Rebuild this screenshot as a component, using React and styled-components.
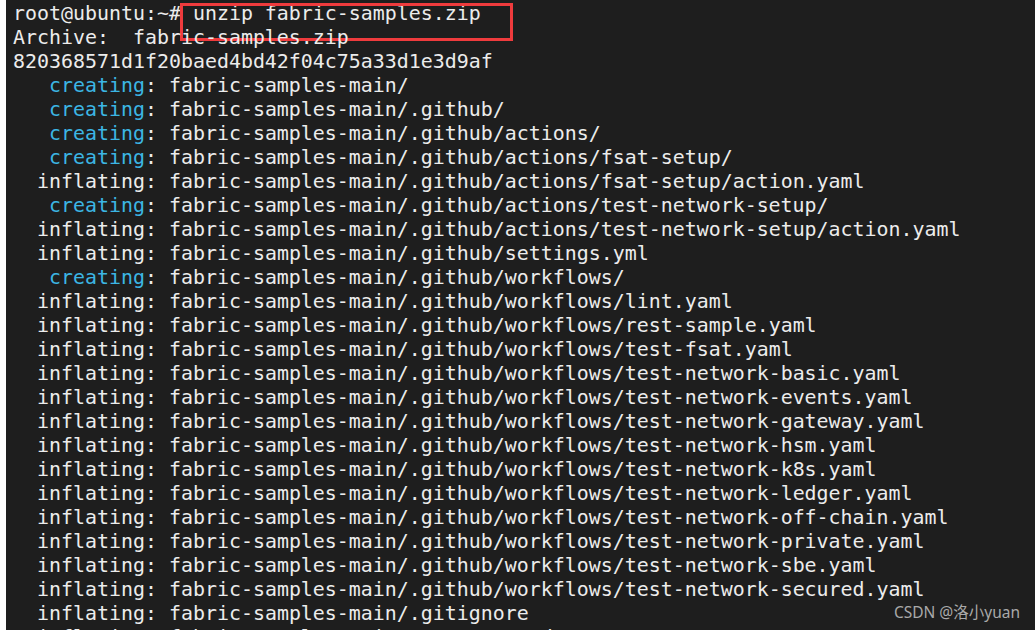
import React from 'react';
import styled, { createGlobalStyle } from 'styled-components';

const GlobalStyle = createGlobalStyle`
    html, body {
        margin: 0;
        padding: 0;
        background: #ffffff;
    }
`;

const files = [
    ['creating', 'fabric-samples-main/'],
    ['creating', 'fabric-samples-main/.github/'],
    ['creating', 'fabric-samples-main/.github/actions/'],
    ['creating', 'fabric-samples-main/.github/actions/fsat-setup/'],
    ['inflating', 'fabric-samples-main/.github/actions/fsat-setup/action.yaml'],
    ['creating', 'fabric-samples-main/.github/actions/test-network-setup/'],
    ['inflating', 'fabric-samples-main/.github/actions/test-network-setup/action.yaml'],
    ['inflating', 'fabric-samples-main/.github/settings.yml'],
    ['creating', 'fabric-samples-main/.github/workflows/'],
    ['inflating', 'fabric-samples-main/.github/workflows/lint.yaml'],
    ['inflating', 'fabric-samples-main/.github/workflows/rest-sample.yaml'],
    ['inflating', 'fabric-samples-main/.github/workflows/test-fsat.yaml'],
    ['inflating', 'fabric-samples-main/.github/workflows/test-network-basic.yaml'],
    ['inflating', 'fabric-samples-main/.github/workflows/test-network-events.yaml'],
    ['inflating', 'fabric-samples-main/.github/workflows/test-network-gateway.yaml'],
    ['inflating', 'fabric-samples-main/.github/workflows/test-network-hsm.yaml'],
    ['inflating', 'fabric-samples-main/.github/workflows/test-network-k8s.yaml'],
    ['inflating', 'fabric-samples-main/.github/workflows/test-network-ledger.yaml'],
    ['inflating', 'fabric-samples-main/.github/workflows/test-network-off-chain.yaml'],
    ['inflating', 'fabric-samples-main/.github/workflows/test-network-private.yaml'],
    ['inflating', 'fabric-samples-main/.github/workflows/test-network-sbe.yaml'],
    ['inflating', 'fabric-samples-main/.github/workflows/test-network-secured.yaml'],
    ['inflating', 'fabric-samples-main/.gitignore'],
    ['inflating', 'fabric-samples-main/CHANGELOG.md'],
];

function App() {
    return (
        <Page>
            <GlobalStyle />
            <Terminal>
                <Line>
                    root@ubuntu:~# unzip fabric-samples.zip
                    <Highlight />
                </Line>
                <Line>Archive:  fabric-samples.zip</Line>
                <Line>820368571d1f20baed4bd42f04c75a33d1e3d9af</Line>
                {files.map(([action, path], i) => (
                    <Line key={i}>
                        {action === 'creating' ? '   ' : '  '}
                        <Action created={action === 'creating'}>{action}</Action>
                        {': ' + path}
                    </Line>
                ))}
                <Watermark>CSDN @洛小yuan</Watermark>
            </Terminal>
        </Page>
    );
}

const Page = styled.div`
    width: 1035px;
    height: 630px;
    display: flex;
    background: #ffffff;
    overflow: hidden;
`;

const Terminal = styled.div`
    position: relative;
    flex: 1;
    margin-left: 6px;
    padding: 2px 0 0 7px;
    background: #1e1e1e;
    color: #ececec;
    font-family: "DejaVu Sans Mono", monospace;
    font-size: 19.93px;
    line-height: 24px;
    overflow: hidden;
`;

const Line = styled.div`
    position: relative;
    white-space: pre;
    height: 24px;
`;

const Action = styled.span`
    color: ${props => props.created ? '#3cb6e4' : '#ececec'};
`;

const Highlight = styled.div`
    position: absolute;
    left: 167px;
    top: 1px;
    width: 327px;
    height: 32px;
    border: 3px solid #ef3b3d;
    pointer-events: none;
`;

const Watermark = styled.div`
    position: absolute;
    right: 15px;
    bottom: 9px;
    color: #a9a9a9;
    font-family: "Noto Sans", "Noto Sans CJK SC", sans-serif;
    font-size: 15.5px;
    line-height: 18px;
`;

export default App;
